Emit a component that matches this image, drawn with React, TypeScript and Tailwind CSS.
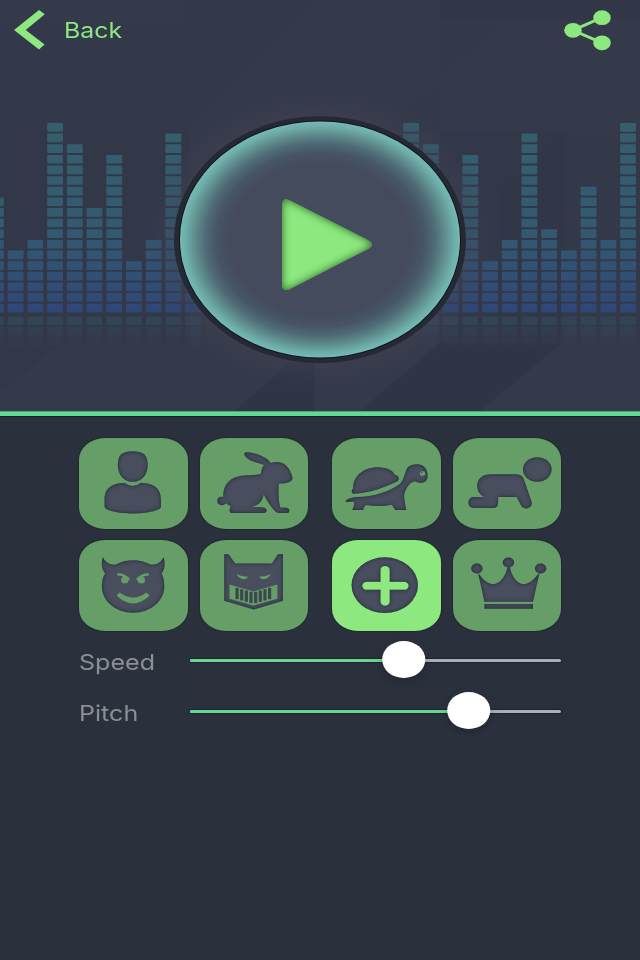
import React, { useState } from 'react';

type EffectId = 'person' | 'rabbit' | 'turtle' | 'baby' | 'devil' | 'robot' | 'plus' | 'crown';

interface Effect {
  id: EffectId;
  label: string;
  viewBox: string;
}

// Effects in display order, two pairs per row
const rows: Effect[][][] = [
  [
    [
      { id: 'person', label: 'Normal voice', viewBox: '25 23 327 274' },
      { id: 'rabbit', label: 'Fast voice', viewBox: '27 23 327 274' },
    ],
    [
      { id: 'turtle', label: 'Slow voice', viewBox: '22 23 327 274' },
      { id: 'baby', label: 'Baby voice', viewBox: '23 23 327 274' },
    ],
  ],
  [
    [
      { id: 'devil', label: 'Devil voice', viewBox: '25 23 327 274' },
      { id: 'robot', label: 'Mask voice', viewBox: '388 23 327 274' },
    ],
    [
      { id: 'plus', label: 'Custom voice', viewBox: '23 23 327 274' },
      { id: 'crown', label: 'Royal voice', viewBox: '383 23 327 274' },
    ],
  ],
];

// Number of lit cells per equalizer column
const leftBars = [11, 6, 7, 18, 16, 10, 15, 5, 7, 17, 6];
const rightBars = [18, 16, 10, 15, 5, 7, 17, 8, 6, 12, 7, 18];

function Bars({ levels, start }: { levels: number[]; start: number }) {
  return (
    <>
      {levels.map((level, i) => {
        const x = start + i * 19.72;
        return (
          <g key={i}>
            {Array.from({ length: level }, (_, row) => (
              <rect key={row} x={x} y={303.7 - row * 10.63} width="15.8" height="8.7" rx="1" fill="url(#bars)" />
            ))}
            {[0.3, 0.17, 0.07].map((opacity, row) => (
              <rect
                key={row}
                x={x}
                y={316.4 + row * 10.3}
                width="15.8"
                height="8.7"
                rx="1"
                fill="#355f78"
                opacity={opacity}
              />
            ))}
          </g>
        );
      })}
    </>
  );
}

function Backdrop() {
  return (
    <svg className="absolute inset-0 h-full w-full" viewBox="0 0 640 411" preserveAspectRatio="none" aria-hidden="true">
      <defs>
        <linearGradient id="bars" gradientUnits="userSpaceOnUse" x1="0" y1="120" x2="0" y2="314">
          <stop offset="0" stopColor="#355f6c" />
          <stop offset="0.55" stopColor="#335a70" />
          <stop offset="0.8" stopColor="#315075" />
          <stop offset="1" stopColor="#2f4676" />
        </linearGradient>
        <radialGradient id="halo">
          <stop offset="0.75" stopColor="#454555" stopOpacity="0.9" />
          <stop offset="1" stopColor="#3b3e50" stopOpacity="0" />
        </radialGradient>
      </defs>
      <rect width="640" height="411" fill="#353a4b" />
      <path d="M0 20H185V131H0Z" fill="#33394a" />
      <path d="M185 0H320L190 131H185Z" fill="#333949" />
      <path d="M0 131H190V345H0Z" fill="#333848" />
      <path d="M440 0H640V20H440Z" fill="#313747" />
      <path d="M440 20H510L380 131H440Z" fill="#343949" />
      <path d="M440 131H565V345H440Z" fill="#333849" />
      <path d="M565 131L500 190V345H565Z" fill="#323747" />
      <path d="M565 131H640V345H565Z" fill="#34394a" />
      <path d="M64 340L0 393V340Z" fill="#333849" />
      <path d="M235 411L290 362H314V411Z" fill="#303545" />
      <path d="M360 411L440 343H562L480 411Z" fill="#2f3544" />
      <Bars levels={leftBars} start={-12} />
      <Bars levels={rightBars} start={403.2} />
      <ellipse cx="320" cy="240" rx="176" ry="150" fill="url(#halo)" opacity="0.6" />
    </svg>
  );
}

function BackIcon() {
  return (
    <svg className="h-[40px] w-[32px]" viewBox="0 0 32 40">
      <path d="M25 0L30.8 4.3L11.7 20L30.6 34.4L25 39.5L0 20Z" fill="#8ce87f" />
    </svg>
  );
}

function ShareIcon() {
  return (
    <svg className="h-[41px] w-[47px]" viewBox="0 0 47 41">
      <path d="M38 7.5L9 20.3L38 32.8" fill="none" stroke="#8ce87f" strokeWidth="3" />
      <ellipse cx="9" cy="20.3" rx="8.8" ry="7.4" fill="#8ce87f" />
      <ellipse cx="38" cy="7.7" rx="8.8" ry="7.4" fill="#8ce87f" />
      <ellipse cx="38" cy="32.8" rx="8.8" ry="7.4" fill="#8ce87f" />
    </svg>
  );
}

function PlayButton({ onClick }: { onClick: () => void }) {
  return (
    <button type="button" aria-label="Play" onClick={onClick} className="h-[248px] w-[292px]">
      <svg className="h-full w-full" viewBox="174 116 292 248">
        <defs>
          <radialGradient id="dial">
            <stop offset="0" stopColor="#454c5d" />
            <stop offset="0.64" stopColor="#434b5d" />
            <stop offset="0.74" stopColor="#465565" />
            <stop offset="0.82" stopColor="#4f6b77" />
            <stop offset="0.9" stopColor="#60908f" />
            <stop offset="0.96" stopColor="#6dadaa" />
            <stop offset="1" stopColor="#75b9b5" />
          </radialGradient>
        </defs>
        <ellipse cx="320" cy="239.6" rx="146" ry="123.4" fill="#252933" />
        <ellipse cx="320" cy="239.5" rx="141" ry="119" fill="#10171c" />
        <ellipse cx="320" cy="239.5" rx="140" ry="118" fill="url(#dial)" />
        <path
          d="M282 206Q282 196 291 201L366 239Q378 244.500 366 250L291 288.500Q282 293 282 284Z"
          fill="#8ce87f"
          filter="url(#playInset)"
        />
      </svg>
    </button>
  );
}

// Shared inner shadow filters for the cut-out look
function Filters() {
  return (
    <svg className="absolute h-0 w-0" aria-hidden="true">
      <defs>
        <filter id="inset" x="-10%" y="-10%" width="120%" height="120%" colorInterpolationFilters="sRGB">
          <feComponentTransfer in="SourceAlpha" result="inverse">
            <feFuncA type="table" tableValues="1 0" />
          </feComponentTransfer>
          <feGaussianBlur in="inverse" stdDeviation="6" result="blur" />
          <feFlood floodColor="#1c232c" floodOpacity="0.9" />
          <feComposite in2="blur" operator="in" />
          <feComposite in2="SourceAlpha" operator="in" result="shadow" />
          <feMerge>
            <feMergeNode in="SourceGraphic" />
            <feMergeNode in="shadow" />
          </feMerge>
        </filter>
        <filter id="playInset" x="-10%" y="-10%" width="120%" height="120%" colorInterpolationFilters="sRGB">
          <feComponentTransfer in="SourceAlpha" result="inverse">
            <feFuncA type="table" tableValues="1 0" />
          </feComponentTransfer>
          <feGaussianBlur in="inverse" stdDeviation="4.2" result="blur" />
          <feFlood floodColor="#2a6422" floodOpacity="1" />
          <feComposite in2="blur" operator="in" />
          <feComposite in2="SourceAlpha" operator="in" result="shadow" />
          <feMerge>
            <feMergeNode in="SourceGraphic" />
            <feMergeNode in="shadow" />
          </feMerge>
        </filter>
      </defs>
    </svg>
  );
}

function EffectShape({ id }: { id: EffectId }) {
  switch (id) {
    case 'person':
      return (
        <>
          <path d="M187 63C218 63 232 74 232 104C232 135 212 155 187 155C162 155 142 135 142 104C142 74 156 63 187 63Z" />
          <path d="M162 158Q187 177 212 158C248 160 272 172 272 210V229C272 242 225 250 187 250C149 250 102 242 102 229V210C102 172 126 160 162 158Z" />
        </>
      );
    case 'rabbit':
      return (
        <path d="M166 66C186 66 206 74 220 81C230 86 236 92 240 98C252 94 264 94 274 98C292 105 303 126 306 144C305 154 290 160 265 160C262 185 263 212 269 232L288 233C299 235 299 249 288 249L262 249C252 246 232 218 219 193C216 212 205 224 185 230L218 232C231 234 231 249 218 249L121 249C114 246 116 234 120 229C114 226 109 223 106 219C98 230 79 226 79 212C79 202 89 198 97 201C97 170 110 140 160 136C180 134 207 135 211 129C213 118 213 112 220 104C200 98 174 92 163 78C159 72 160 67 166 66Z" />
      );
    case 'turtle':
      return (
        <>
          <path d="M90 191C80 191 79 179 86 175C84 140 115 111 160 111C190 112 205 120 211 134C225 138 227 149 218 154C185 170 135 189 90 191Z" />
          <path d="M62 214C68 206 80 203 95 201C150 200 200 182 224 163C240 150 240 130 249 113C258 101 285 98 298 108C308 116 312 130 309 145C306 158 290 162 272 153C256 156 246 172 240 190C238 205 242 220 246 240L213 240L202 224C180 229 150 229 126 225C120 228 116 234 116 240L83 240C88 230 90 222 88 215C80 214 72 217 62 214Z" />
        </>
      );
    case 'baby':
      return (
        <>
          <ellipse cx="277" cy="118" rx="43" ry="37" />
          <path d="M138 132H212Q230 132 236 146L260 216C262 228 254 235 244 235C234 235 230 230 227 224L215 201H159V218Q159 234 143 234H86C64 234 64 201 86 201H117C103 193 96 181 96 166C96 146 112 132 138 132Z" />
        </>
      );
    case 'devil':
      return (
        <path d="M97 75C104 92 122 99 136 97C168 80 208 80 240 97C256 99 272 92 280 75C285 93 284 110 274 124C280 136 282 148 282 163C282 207 240 242 188 242C136 242 94 207 94 163C94 148 96 136 104 124C93 110 91 93 97 75Z" />
      );
    case 'robot':
      return <path d="M461 66H474L494 94H605L623 66H638V206L550 232L461 206Z" />;
    case 'plus':
      return (
        <path
          fillRule="evenodd"
          d="M282 159A100 84 0 1 1 82 159A100 84 0 1 1 282 159ZM169 149V113A14 12 0 0 1 197 113V149H240A14 12 0 0 1 240 173H197V209A14 12 0 0 1 169 209V173H128A14 12 0 0 1 128 149Z"
        />
      );
    case 'crown':
      return (
        <>
          <ellipse cx="455" cy="109" rx="17" ry="15" />
          <ellipse cx="550" cy="91" rx="17" ry="15" />
          <ellipse cx="647" cy="109" rx="17" ry="15" />
          <path d="M458 120C470 140 488 156 506 156C525 154 544 130 547 102H554C558 130 575 156 597 156C614 154 630 140 644 120L624 209H478Z" />
          <path d="M478 216H624V230H478Z" />
        </>
      );
  }
}

// Green parts drawn over the faces
function EffectDetails({ id }: { id: EffectId }) {
  if (id === 'turtle') {
    return (
      <>
        <ellipse cx="295" cy="130" rx="8" ry="7" fill="#659e67" />
        <circle cx="292" cy="127" r="2.5" fill="#484d5d" />
      </>
    );
  }
  if (id === 'devil') {
    return (
      <g fill="#659e67">
        <path d="M144 127Q160 127 174 140M232 127Q216 127 202 140" fill="none" stroke="#659e67" strokeWidth="8" strokeLinecap="round" />
        <ellipse cx="163" cy="144" rx="11" ry="10" />
        <ellipse cx="213" cy="144" rx="11" ry="10" />
        <path d="M138 190L148 181Q188 212 228 181L238 190Q188 238 138 190Z" />
      </g>
    );
  }
  if (id === 'robot') {
    return (
      <g fill="#659e67">
        <path d="M498 125Q514 134 533 134Q530 142 518 141Q504 138 498 125Z" />
        <path d="M601 125Q585 134 566 134Q569 142 581 141Q595 138 601 125Z" />
        <path d="M477 157L549 178L621 157V200L549 220L477 200Z" />
        <g fill="#3b474d">
          {[0, 1, 2, 3, 4, 5, 6, 7].map((n) => {
            const drop = 14 - Math.abs(n - 3.5) * 4;
            return <rect key={n} x={495 + n * 14} y={167 + drop} width="9.5" height="34" />;
          })}
        </g>
      </g>
    );
  }
  return null;
}

interface EffectButtonProps {
  effect: Effect;
  active: boolean;
  onSelect: (id: EffectId) => void;
}

function EffectButton({ effect, active, onSelect }: EffectButtonProps) {
  return (
    <button
      type="button"
      aria-label={effect.label}
      aria-pressed={active}
      onClick={() => onSelect(effect.id)}
      className={`h-[91px] w-[108.5px] overflow-hidden rounded-[26px/22px] shadow-[0_0_1px_1px_rgba(20,30,35,0.35)] ${
        active ? 'bg-[#8ce87f]' : 'bg-[#659e67]'
      }`}
    >
      <svg className="h-full w-full" viewBox={effect.viewBox} preserveAspectRatio="none">
        <g fill="#484e5e" filter="url(#inset)">
          <EffectShape id={effect.id} />
        </g>
        <EffectDetails id={effect.id} />
      </svg>
    </button>
  );
}

function Slider({ label, value }: { label: string; value: number }) {
  return (
    <div className="flex h-[51px] items-center">
      <span className="w-[111.5px]">
        <span className="inline-block origin-left scale-x-[1.14] text-[22px] text-[#8b8e93]">{label}</span>
      </span>
      <div className="relative -mt-[3px] h-[3.5px] w-[371px] rounded-full bg-[#acaeb6] shadow-[0_0_1px_1px_rgba(20,26,36,0.5)]">
        <div className="h-full rounded-full bg-[#67d78d]" style={{ width: `${value}%` }} />
        <div
          className="absolute -top-[18px] h-[37px] w-[43.5px] -translate-x-1/2 rounded-[50%] bg-white shadow-[0_3px_8px_rgba(0,0,0,0.2)]"
          style={{ left: `${value}%` }}
        />
      </div>
    </div>
  );
}

export default function App() {
  const [selected, setSelected] = useState<EffectId>('plus');
  const [, setPlaying] = useState(false);

  return (
    <div className="flex h-[960px] w-[640px] flex-col overflow-hidden bg-[#2a313d] font-['Inter',sans-serif]">
      <Filters />
      <section className="relative h-[411px] shrink-0">
        <Backdrop />
        <div className="relative flex h-[116px] items-start justify-between pt-[10px] pr-[29px] pl-[14px]">
          <button type="button" className="flex items-center">
            <BackIcon />
            <span className="ml-[17.5px] inline-block origin-left scale-x-[1.13] pt-px text-[22px] text-[#8ce87f]">
              Back
            </span>
          </button>
          <button type="button" aria-label="Share">
            <ShareIcon />
          </button>
        </div>
        <div className="relative flex justify-center">
          <PlayButton onClick={() => setPlaying((p) => !p)} />
        </div>
      </section>
      <div className="h-[5px] shrink-0 border-t border-[#48a873] bg-[#62d98d] shadow-[0_0_1px_1px_rgba(15,25,40,0.7)]" />

      <main className="flex flex-col px-[79px] pt-[22px]">
        <div className="flex flex-col gap-[10.5px]">
          {rows.map((row, i) => (
            <div key={i} className="flex justify-between">
              {row.map((pair, j) => (
                <div key={j} className="flex gap-3">
                  {pair.map((effect) => (
                    <EffectButton
                      key={effect.id}
                      effect={effect}
                      active={selected === effect.id}
                      onSelect={setSelected}
                    />
                  ))}
                </div>
              ))}
            </div>
          ))}
        </div>
        <div className="mt-[6px]">
          <Slider label="Speed" value={57.6} />
          <Slider label="Pitch" value={75.1} />
        </div>
      </main>
    </div>
  );
}
